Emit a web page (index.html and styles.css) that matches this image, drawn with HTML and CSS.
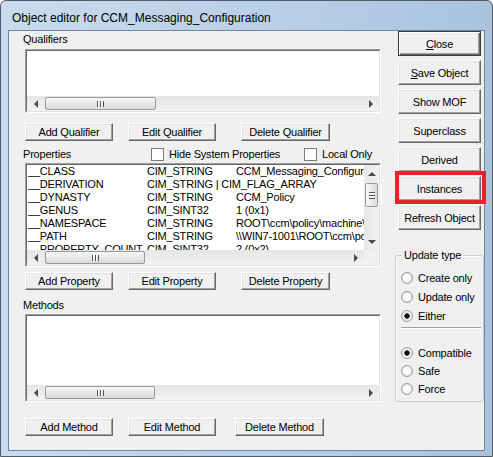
FILE: index.html
```html
<!DOCTYPE html>
<html lang="en">
<head>
    <meta charset="UTF-8">
    <title>Object editor</title>
    <link rel="stylesheet" href="styles.css">
</head>
<body>
    <div class="window">
        <div class="titlebar">Object editor for CCM_Messaging_Configuration</div>
        <div class="client">
            <div class="left-col">
                <!-- Qualifiers -->
                <div class="label label-qualifiers">Qualifiers</div>
                <div class="list list-qualifiers">
                    <div class="list-inner">
                        <div class="list-body"></div>
                        <div class="hscroll">
                            <span class="arrow-box"><span class="tri tri-left"></span></span>
                            <span class="thumb thumb-qual"><span class="grip"></span></span>
                            <span class="fill"></span>
                            <span class="arrow-box"><span class="tri tri-right"></span></span>
                        </div>
                    </div>
                </div>
                <div class="btn-row btn-row-qual">
                    <button class="btn">Add Qualifier</button>
                    <button class="btn btn-edit">Edit Qualifier</button>
                    <button class="btn btn-delete">Delete Qualifier</button>
                </div>

                <!-- Properties -->
                <div class="props-header">
                    <span class="props-label">Properties</span>
                    <span class="check-item check-hide"><span class="check"></span>Hide System Properties</span>
                    <span class="check-item"><span class="check"></span>Local Only</span>
                </div>
                <div class="list list-props">
                    <div class="list-inner list-grid">
                        <div class="list-body">
                            <div class="prop-row"><span class="c-name">__CLASS</span><span class="c-type">CIM_STRING</span><span class="c-value">CCM_Messaging_Configuration</span></div>
                            <div class="prop-row"><span class="c-name">__DERIVATION</span><span class="c-type">CIM_STRING | CIM_FLAG_ARRAY</span><span class="c-value"></span></div>
                            <div class="prop-row"><span class="c-name">__DYNASTY</span><span class="c-type">CIM_STRING</span><span class="c-value">CCM_Policy</span></div>
                            <div class="prop-row"><span class="c-name">__GENUS</span><span class="c-type">CIM_SINT32</span><span class="c-value">1 (0x1)</span></div>
                            <div class="prop-row"><span class="c-name">__NAMESPACE</span><span class="c-type">CIM_STRING</span><span class="c-value">ROOT\ccm\policy\machine\actualconfig</span></div>
                            <div class="prop-row"><span class="c-name">__PATH</span><span class="c-type">CIM_STRING</span><span class="c-value">\\WIN7-1001\ROOT\ccm\policy\machine</span></div>
                            <div class="prop-row"><span class="c-name">__PROPERTY_COUNT</span><span class="c-type">CIM_SINT32</span><span class="c-value">2 (0x2)</span></div>
                        </div>
                        <div class="vscroll">
                            <span class="arrow-box-v"><span class="tri tri-up"></span></span>
                            <span class="thumb-v"><span class="grip-v"></span></span>
                            <span class="fill"></span>
                            <span class="arrow-box-v"><span class="tri tri-down"></span></span>
                        </div>
                        <div class="hscroll">
                            <span class="arrow-box"><span class="tri tri-left"></span></span>
                            <span class="thumb thumb-props"><span class="grip"></span></span>
                            <span class="fill"></span>
                            <span class="arrow-box"><span class="tri tri-right"></span></span>
                        </div>
                        <div class="corner"></div>
                    </div>
                </div>
                <div class="btn-row btn-row-props">
                    <button class="btn">Add Property</button>
                    <button class="btn btn-edit">Edit Property</button>
                    <button class="btn btn-delete">Delete Property</button>
                </div>

                <!-- Methods -->
                <div class="label label-methods">Methods</div>
                <div class="list list-methods">
                    <div class="list-inner">
                        <div class="list-body"></div>
                        <div class="hscroll">
                            <span class="arrow-box"><span class="tri tri-left"></span></span>
                            <span class="thumb thumb-methods"><span class="grip"></span></span>
                            <span class="fill"></span>
                            <span class="arrow-box"><span class="tri tri-right"></span></span>
                        </div>
                    </div>
                </div>
                <div class="btn-row btn-row-methods">
                    <button class="btn">Add Method</button>
                    <button class="btn btn-edit">Edit Method</button>
                    <button class="btn btn-delete-method">Delete Method</button>
                </div>
            </div>

            <div class="right-col">
                <button class="side-btn default-btn"><u>C</u>lose</button>
                <button class="side-btn"><u>S</u>ave Object</button>
                <button class="side-btn">Show MOF</button>
                <button class="side-btn">Superclass</button>
                <button class="side-btn">Derived</button>
                <div class="highlight">
                    <button class="side-btn">Instances</button>
                </div>
                <button class="side-btn">Refresh Object</button>

                <fieldset class="group">
                    <legend>Update type</legend>
                    <div class="radio-list">
                        <div class="radio-row"><span class="radio"></span>Create only</div>
                        <div class="radio-row"><span class="radio"></span>Update only</div>
                        <div class="radio-row"><span class="radio checked"></span>Either</div>
                    </div>
                    <div class="separator"></div>
                    <div class="radio-list radio-list-2">
                        <div class="radio-row"><span class="radio checked"></span>Compatible</div>
                        <div class="radio-row"><span class="radio"></span>Safe</div>
                        <div class="radio-row"><span class="radio"></span>Force</div>
                    </div>
                </fieldset>
            </div>
        </div>
    </div>
</body>
</html>
```

FILE: styles.css
```css
body {
    margin: 0;
    background: #fff;
    font-family: "Liberation Sans", Arial, sans-serif;
    font-size: 11px;
    letter-spacing: -0.2px;
    color: #000;
}
.window {
    width: 493px;
    height: 457px;
    box-sizing: border-box;
    border: 1px solid #4f5b68;
    border-radius: 6px 6px 0 0;
    padding: 0 7px 5px 7px;
    background: linear-gradient(to right, #c9dbef, #b9cfe8 55%, #a9c3df);
    display: flex;
    flex-direction: column;
}
.titlebar {
    height: 29px;
    box-sizing: border-box;
    padding: 10px 0 0 4px;
    font-size: 12px;
    line-height: 14px;
    letter-spacing: 0;
    white-space: nowrap;
}
.client {
    flex: 1;
    border: 1px solid #71869e;
    background: #f0f0f0;
    display: flex;
    padding-left: 14px;
}
.left-col {
    width: 358px;
    display: flex;
    flex-direction: column;
}
.label {
    line-height: 13px;
    height: 13px;
}
.label-qualifiers {
    margin-top: 2px;
}
.label-methods {
    margin-top: 9px;
}

/* list boxes */
.list {
    margin-left: 2px;
    box-sizing: border-box;
    border: 1px solid;
    border-color: #a0a0a0 #fff #fff #a0a0a0;
}
.list-inner {
    height: 100%;
    box-sizing: border-box;
    border: 1px solid;
    border-color: #696969 #e3e3e3 #e3e3e3 #696969;
    background: #fff;
    display: flex;
    flex-direction: column;
}
.list-body {
    flex: 1;
    overflow: hidden;
}
.list-qualifiers {
    margin-top: 3px;
    height: 64px;
}
.list-props {
    margin-top: 2px;
    height: 104px;
}
.list-methods {
    margin-top: 2px;
    height: 88px;
}
.list-grid {
    display: grid;
    grid-template-columns: 1fr 15px;
    grid-template-rows: 1fr 15px;
}

/* scrollbars */
.hscroll {
    height: 15px;
    display: flex;
    align-items: center;
    background: linear-gradient(#e6e6e6, #f2f2f2);
}
.vscroll {
    display: flex;
    flex-direction: column;
    align-items: center;
    background: linear-gradient(to right, #e6e6e6, #f2f2f2);
}
.corner {
    background: #f0f0f0;
}
.fill {
    flex: 1;
}
.arrow-box {
    width: 17px;
    height: 15px;
    display: flex;
    align-items: center;
    justify-content: center;
}
.arrow-box-v {
    width: 15px;
    height: 17px;
    display: flex;
    align-items: center;
    justify-content: center;
}
.tri {
    width: 0;
    height: 0;
    border: 4px solid transparent;
}
.tri-left {
    border-left-width: 0;
    border-right-color: #4a4a4a;
}
.tri-right {
    border-right-width: 0;
    border-left-color: #4a4a4a;
}
.tri-up {
    border-top-width: 0;
    border-bottom-color: #4a4a4a;
}
.tri-down {
    border-bottom-width: 0;
    border-top-color: #4a4a4a;
}
.thumb {
    height: 13px;
    margin-left: 1px;
    box-sizing: border-box;
    border: 1px solid #9a9a9a;
    border-radius: 2px;
    background: linear-gradient(#f7f7f7, #e9e9e9 50%, #d9d9d9);
    display: flex;
    align-items: center;
    justify-content: center;
}
.thumb-qual {
    width: 111px;
}
.thumb-props {
    width: 100px;
}
.thumb-methods {
    width: 110px;
}
.grip {
    width: 7px;
    height: 6px;
    background: repeating-linear-gradient(to right, #555 0 1px, #fff 1px 2px, transparent 2px 3px);
}
.thumb-v {
    width: 13px;
    height: 24px;
    margin-top: 1px;
    box-sizing: border-box;
    border: 1px solid #9a9a9a;
    border-radius: 2px;
    background: linear-gradient(to right, #f7f7f7, #e9e9e9 50%, #d9d9d9);
    display: flex;
    align-items: center;
    justify-content: center;
}
.grip-v {
    width: 6px;
    height: 7px;
    background: repeating-linear-gradient(#555 0 1px, #fff 1px 2px, transparent 2px 3px);
}

/* property rows */
.prop-row {
    display: flex;
    height: 13px;
    line-height: 13px;
    padding-left: 1px;
    white-space: nowrap;
}
.c-name {
    flex: 0 0 119px;
    width: 119px;
}
.c-type {
    flex: 0 0 89px;
    width: 89px;
}

/* properties header */
.props-header {
    margin-top: 7px;
    height: 13px;
    line-height: 13px;
    display: flex;
    white-space: nowrap;
}
.props-label {
    width: 128px;
}
.check-item {
    display: flex;
    align-items: center;
    gap: 5px;
}
.check-hide {
    width: 153px;
}
.check {
    width: 13px;
    height: 13px;
    box-sizing: border-box;
    border: 1px solid #7a7a7a;
    background: #fff;
}

/* buttons */
.btn-row {
    display: flex;
    padding-left: 2px;
}
.btn-row-qual {
    margin-top: 10px;
}
.btn-row-props {
    margin-top: 5px;
}
.btn-row-methods {
    margin-top: 16px;
}
.btn,
.side-btn {
    font-family: "Liberation Sans", Arial, sans-serif;
    font-size: 11px;
    letter-spacing: -0.2px;
    color: #000;
    padding: 0;
    box-sizing: border-box;
    background: #f0f0f0;
    border: 1px solid;
    border-color: #fff #696969 #696969 #fff;
    box-shadow: inset -1px -1px #a0a0a0, inset 1px 1px #e3e3e3;
    border-radius: 0;
}
.btn {
    width: 88px;
    height: 18px;
}
.btn-edit {
    margin-left: 15px;
}
.btn-delete {
    width: 89px;
    margin-left: 25px;
}
.btn-delete-method {
    width: 89px;
    margin-left: 19px;
}

.right-col {
    width: 89px;
    margin-left: 14px;
    display: flex;
    flex-direction: column;
    align-items: flex-start;
}
.side-btn {
    width: 83px;
    height: 25px;
    margin-left: 3px;
    margin-top: 4px;
}
.default-btn {
    margin-top: 0;
    border: 1px solid #3a3a3a;
    box-shadow: inset 1px 1px #fff, inset -1px -1px #696969, inset -2px -2px #a0a0a0;
}
.side-btn u {
    text-decoration-thickness: 1px;
}
.highlight {
    position: relative;
    display: flex;
}
.highlight::after {
    content: "";
    position: absolute;
    left: 0;
    top: -1px;
    width: 91px;
    height: 33px;
    box-sizing: border-box;
    border: 4px solid #e5232b;
}

/* update type group */
.group {
    margin: 19px 0 0 0;
    width: 89px;
    box-sizing: border-box;
    border: 1px solid #c5cfd6;
    border-radius: 3px;
    padding: 0 2px 3px 5px;
    box-shadow: inset 1px 1px #fff;
}
.group legend {
    padding: 0 3px 0 2px;
    margin-left: 1px;
    line-height: 13px;
}
.radio-list {
    margin-top: 6px;
}
.radio-list-2 {
    margin-top: 15px;
}
.radio-row {
    height: 19px;
    display: flex;
    align-items: center;
    gap: 5px;
    white-space: nowrap;
}
.radio-list-2 .radio-row {
    height: 18px;
}
.radio {
    width: 12px;
    height: 12px;
    box-sizing: border-box;
    border-radius: 50%;
    border: 1px solid #9a9a9a;
    background: radial-gradient(circle at 50% 50%, #fdfdfd 0 3px, #e4e4e4 5px);
}
.radio.checked {
    background: radial-gradient(circle at 50% 50%, #111 0 2px, #444 2.5px, #e8e8e8 3px, #f4f4f4 5px);
}
.separator {
    margin-top: 2px;
    height: 1px;
    border-top: 1px solid #a0a0a0;
    background: #fff;
}
```
